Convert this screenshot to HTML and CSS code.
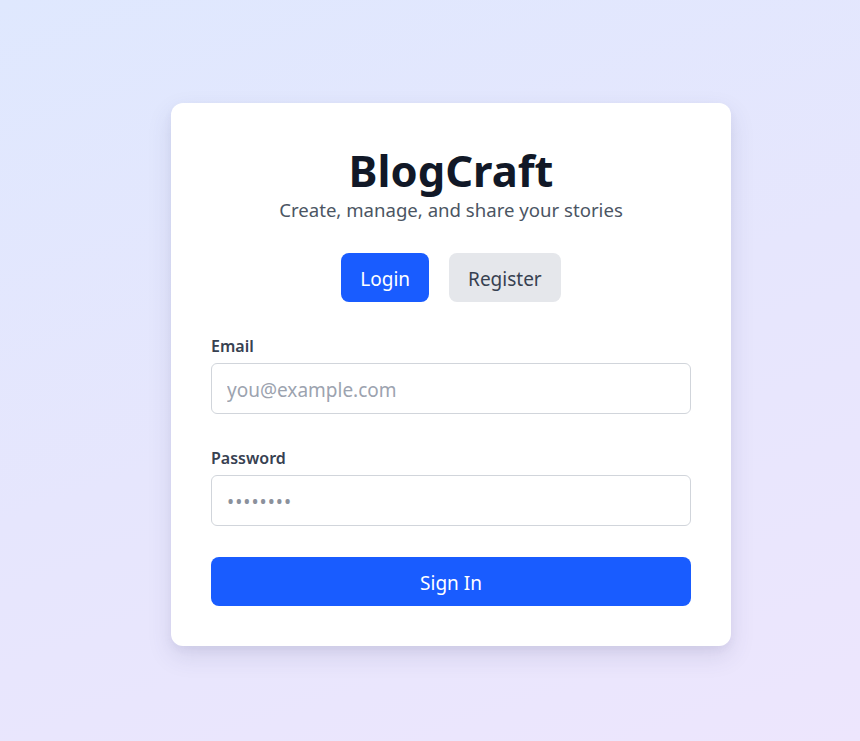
FILE: index.html
```html
<!DOCTYPE html>
<html lang="en">
<head>
<meta charset="utf-8">
<title>BlogCraft</title>
<link rel="stylesheet" href="styles.css">
</head>
<body>
<main class="page">
  <section class="card">
    <h1 class="title">BlogCraft</h1>
    <p class="subtitle">Create, manage, and share your stories</p>
    <div class="tabs">
      <button class="tab tab-active" type="button">Login</button>
      <button class="tab" type="button">Register</button>
    </div>
    <form class="form">
      <div class="field">
        <label class="label" for="email">Email</label>
        <input class="input" id="email" type="email" placeholder="you@example.com">
      </div>
      <div class="field">
        <label class="label" for="password">Password</label>
        <input class="input input-pass" id="password" type="password" placeholder="••••••••">
      </div>
      <button class="submit" type="button">Sign In</button>
    </form>
  </section>
</main>
</body>
</html>
```

FILE: styles.css
```css
* { box-sizing: border-box; }
html, body { margin: 0; padding: 0; }
body {
  font-family: "Noto Sans", "Open Sans", sans-serif;
  background: linear-gradient(160deg, #dfe8fe 0%, #e6e6fd 50%, #ede6fd 100%);
  min-height: 741px;
}
.page {
  min-height: 741px;
  display: flex;
  justify-content: center;
  align-items: flex-start;
  padding: 103px 0 0 42px;
}
.card {
  width: 560px;
  background: #fff;
  border-radius: 12px;
  padding: 43px 40px 40px;
  box-shadow: 0 10px 25px rgba(60, 60, 110, 0.13), 0 4px 8px rgba(60, 60, 110, 0.05);
  display: flex;
  flex-direction: column;
}
.title {
  margin: 0;
  font-size: 43.5px;
  line-height: 48px;
  font-weight: 700;
  color: #111827;
  text-align: center;
}
.subtitle {
  margin: 2px 0 0;
  font-size: 18.6px;
  line-height: 28px;
  color: #4b5563;
  text-align: center;
}
.tabs {
  margin-top: 29px;
  display: flex;
  justify-content: center;
  gap: 20px;
}
.tab {
  font-family: inherit;
  font-size: 19px;
  line-height: 29px;
  height: 49px;
  padding: 12px 19px 8px;
  border: none;
  border-radius: 8px;
  background: #e5e7eb;
  color: #374151;
}
.tab-active {
  background: #195cff;
  color: #fff;
}
.form {
  margin-top: 32px;
  display: flex;
  flex-direction: column;
}
.field {
  display: flex;
  flex-direction: column;
  margin-bottom: 32px;
}
.field + .field { margin-bottom: 31px; }
.label {
  font-size: 16px;
  line-height: 24px;
  font-weight: 600;
  color: #374151;
  margin-bottom: 5px;
}
.input {
  height: 51px;
  border: 1px solid #d1d5db;
  border-radius: 6px;
  padding: 2px 15px 0;
  font-family: inherit;
  font-size: 19px;
  color: #111827;
  outline: none;
}
.input::placeholder { color: #9ca3af; }
.input-pass::placeholder { color: #8b919c; letter-spacing: 1px; }
.submit {
  height: 49px;
  border: none;
  border-radius: 8px;
  background: #195cff;
  color: #fff;
  font-family: inherit;
  font-size: 19px;
  line-height: 29px;
  padding: 12px 0 8px;
}
```
